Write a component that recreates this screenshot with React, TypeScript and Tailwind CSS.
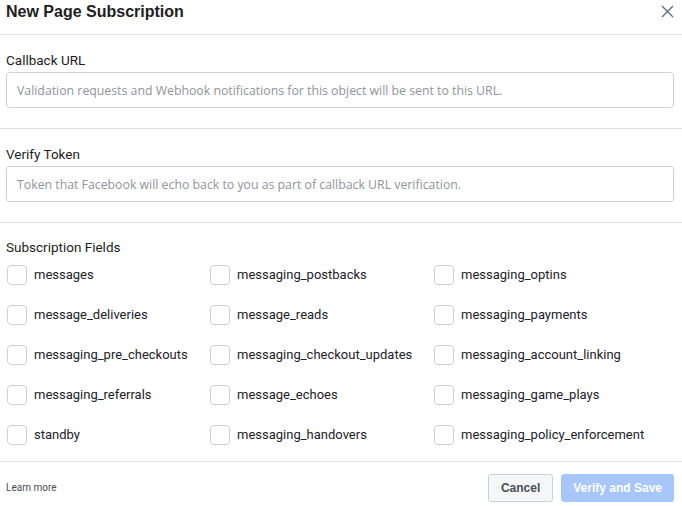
import { useState } from "react"

const fields = [
  "messages",
  "messaging_postbacks",
  "messaging_optins",
  "message_deliveries",
  "message_reads",
  "messaging_payments",
  "messaging_pre_checkouts",
  "messaging_checkout_updates",
  "messaging_account_linking",
  "messaging_referrals",
  "message_echoes",
  "messaging_game_plays",
  "standby",
  "messaging_handovers",
  "messaging_policy_enforcement",
]

export default function App() {
  const [checked, setChecked] = useState<Record<string, boolean>>({})

  return (
    <div className="w-[682px] h-[506px] bg-white text-[#1c1e21] font-['Roboto',sans-serif] overflow-hidden">
      {/* Header */}
      <div className="h-[35px] flex items-center justify-between pl-[6px] pr-[8px] border-b border-[#dddfe2]">
        <h1 className="text-[16px] font-bold font-['Liberation_Sans',Arial,sans-serif] leading-none -mt-[11px]">
          New Page Subscription
        </h1>
        <button className="text-[#606770] -mt-[12px]">
          <svg width="13" height="13" viewBox="0 0 13 13" fill="none" stroke="currentColor" strokeWidth="1.3">
            <path d="M1 1L12 12M12 1L1 12" />
          </svg>
        </button>
      </div>

      {/* Callback URL */}
      <div className="px-[6px] pt-[17px] pb-[20px] border-b border-[#dddfe2]">
        <label className="block text-[13.5px] leading-[16px] mb-[4px]">Callback URL</label>
        <input
          className="w-[668px] h-[36px] border border-[#ccd0d5] rounded-[4px] px-[10px] text-[12.3px] font-['Open_Sans',sans-serif] placeholder:text-[#90949c] outline-none"
          placeholder="Validation requests and Webhook notifications for this object will be sent to this URL."
        />
      </div>

      {/* Verify Token */}
      <div className="px-[6px] pt-[17px] pb-[20px] border-b border-[#dddfe2]">
        <label className="block text-[13.5px] leading-[16px] mb-[4px]">Verify Token</label>
        <input
          className="w-[668px] h-[36px] border border-[#ccd0d5] rounded-[4px] px-[10px] text-[12.3px] font-['Open_Sans',sans-serif] placeholder:text-[#90949c] outline-none"
          placeholder="Token that Facebook will echo back to you as part of callback URL verification."
        />
      </div>

      {/* Subscription Fields */}
      <div className="px-[6px] pt-[16px] pb-[6px] border-b border-[#dddfe2]">
        <div className="text-[13.5px] leading-[16px]">Subscription Fields</div>
        <div className="grid grid-cols-[203px_224px_1fr]">
          {fields.map((f) => (
            <label key={f} className="h-[40px] flex items-center gap-[7px] cursor-pointer">
              <span
                onClick={() => setChecked((c) => ({ ...c, [f]: !c[f] }))}
                className={
                  "w-[20px] h-[20px] ml-[1px] rounded-[4px] border flex items-center justify-center " +
                  (checked[f] ? "bg-[#1877f2] border-[#1877f2]" : "bg-white border-[#ccd0d5]")
                }
              >
                {checked[f] && (
                  <svg width="12" height="12" viewBox="0 0 12 12" fill="none" stroke="white" strokeWidth="2">
                    <path d="M2 6l3 3 5-6" />
                  </svg>
                )}
              </span>
              <span className="text-[13px] text-[#1d2129]">{f}</span>
            </label>
          ))}
        </div>
      </div>

      {/* Footer */}
      <div className="h-[45px] pt-[6px] flex items-center justify-between pl-[6px] pr-[8px]">
        <a href="#" className="text-[10px] text-[#4b4f56]">Learn more</a>
        <div className="flex gap-[8px]">
          <button className="h-[28px] px-[12px] rounded-[3px] border border-[#ccd0d5] bg-[#f5f6f7] text-[12px] font-bold text-[#4b4f56] font-['Liberation_Sans',Arial,sans-serif]">
            Cancel
          </button>
          <button className="h-[28px] px-[12px] rounded-[3px] bg-[#a7c6fb] text-[12px] font-bold text-white font-['Liberation_Sans',Arial,sans-serif] cursor-not-allowed">
            Verify and Save
          </button>
        </div>
      </div>
    </div>
  )
}
